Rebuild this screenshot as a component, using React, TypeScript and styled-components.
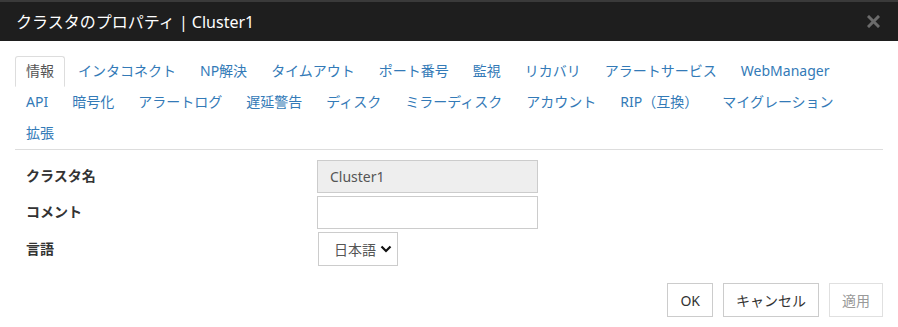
import styled, { createGlobalStyle } from "styled-components";

const GlobalStyle = createGlobalStyle`
  * { box-sizing: border-box; }
  body {
    margin: 0;
    background: #fff;
    font-family: "Noto Sans", "Noto Sans CJK JP", sans-serif;
    font-size: 14px;
    color: #333;
  }
`;

const tabRows = [
  ["情報", "インタコネクト", "NP解決", "タイムアウト", "ポート番号", "監視", "リカバリ", "アラートサービス", "WebManager"],
  ["API", "暗号化", "アラートログ", "遅延警告", "ディスク", "ミラーディスク", "アカウント", "RIP（互換）", "マイグレーション"],
  ["拡張"],
];

const App = () => {
  const active = "情報";
  return (
    <>
      <GlobalStyle />
      <Dialog>
        <Header>
          <Title>クラスタのプロパティ | Cluster1</Title>
          <Close aria-label="close">
            <svg width="13" height="13" viewBox="0 0 13 13">
              <path d="M2 2 L11 11 M11 2 L2 11" stroke="#6b6b6b" strokeWidth="3" strokeLinecap="square" />
            </svg>
          </Close>
        </Header>
        <Body>
          <Tabs>
            {tabRows.map((row, i) => (
              <TabRow key={i}>
                {row.map((t) => (
                  <Tab key={t} $active={t === active}>
                    {t}
                  </Tab>
                ))}
              </TabRow>
            ))}
          </Tabs>
          <Form>
            <Row>
              <Label>クラスタ名</Label>
              <Input value="Cluster1" readOnly $readonly />
            </Row>
            <Row>
              <Label>コメント</Label>
              <Input defaultValue="" />
            </Row>
            <Row>
              <Label>言語</Label>
              <Select>
                <span>日本語</span>
                <svg width="12" height="8" viewBox="0 0 12 8">
                  <path d="M1.5 1.5 L6 6 L10.5 1.5" fill="none" stroke="#111" strokeWidth="2.2" />
                </svg>
              </Select>
            </Row>
          </Form>
          <Footer>
            <Button>OK</Button>
            <Button>キャンセル</Button>
            <Button disabled>適用</Button>
          </Footer>
        </Body>
      </Dialog>
    </>
  );
};

const Dialog = styled.div`
  width: 898px;
  height: 327px;
  background: #fff;
  display: flex;
  flex-direction: column;
`;

const Header = styled.div`
  height: 41px;
  background: #1e1e1e;
  border-top: 2px solid #3a3a3a;
  display: flex;
  align-items: center;
  justify-content: space-between;
  padding: 0 18px 0 16px;
`;

const Title = styled.h1`
  margin: 0;
  font-size: 16px;
  font-weight: normal;
  color: #fff;
  line-height: 1;
`;

const Close = styled.button`
  border: none;
  background: none;
  padding: 0;
  display: flex;
  cursor: pointer;
`;

const Body = styled.div`
  flex: 1;
  padding: 15px 15px 0;
  display: flex;
  flex-direction: column;
`;

const Tabs = styled.nav`
  border-bottom: 1px solid #ddd;
`;

const TabRow = styled.ul`
  list-style: none;
  margin: 0;
  padding: 0;
  display: flex;
`;

const Tab = styled.li<{ $active?: boolean }>`
  height: 31px;
  line-height: 28px;
  padding: 0 10px;
  margin-right: 2px;
  font-size: 14px;
  white-space: nowrap;
  color: ${(p) => (p.$active ? "#555" : "#337ab7")};
  border: 1px solid ${(p) => (p.$active ? "#ddd" : "transparent")};
  border-bottom-color: transparent;
  border-radius: 3px 3px 0 0;
  cursor: pointer;
`;

const Form = styled.div`
  margin-top: 10px;
  display: flex;
  flex-direction: column;
  gap: 3px;
`;

const Row = styled.div`
  display: flex;
  align-items: center;
`;

const Label = styled.label`
  width: 302px;
  padding-left: 11px;
  margin-top: -3px;
  font-weight: bold;
  font-size: 14px;
  color: #333;
`;

const Input = styled.input<{ $readonly?: boolean }>`
  width: 221px;
  height: 33px;
  border: 1px solid #ccc;
  background: ${(p) => (p.$readonly ? "#eee" : "#fff")};
  color: #555;
  font-family: inherit;
  font-size: 14px;
  padding: 0 12px;
  outline: none;
`;

const Select = styled.div`
  margin-left: 1px;
  width: 80px;
  height: 34px;
  border: 1px solid #ccc;
  display: flex;
  align-items: center;
  gap: 4px;
  padding-left: 15px;
  color: #555;
  font-size: 14px;
`;

const Footer = styled.div`
  margin-top: auto;
  margin-bottom: 10px;
  display: flex;
  justify-content: flex-end;
  gap: 10px;
`;

const Button = styled.button`
  height: 34px;
  padding: 0 12px;
  border: 1px solid #ccc;
  background: #fff;
  color: #333;
  font-family: inherit;
  font-size: 14px;
  cursor: pointer;
  &:disabled {
    color: #999;
    border-color: #e0e0e0;
    cursor: default;
  }
`;

export default App;
